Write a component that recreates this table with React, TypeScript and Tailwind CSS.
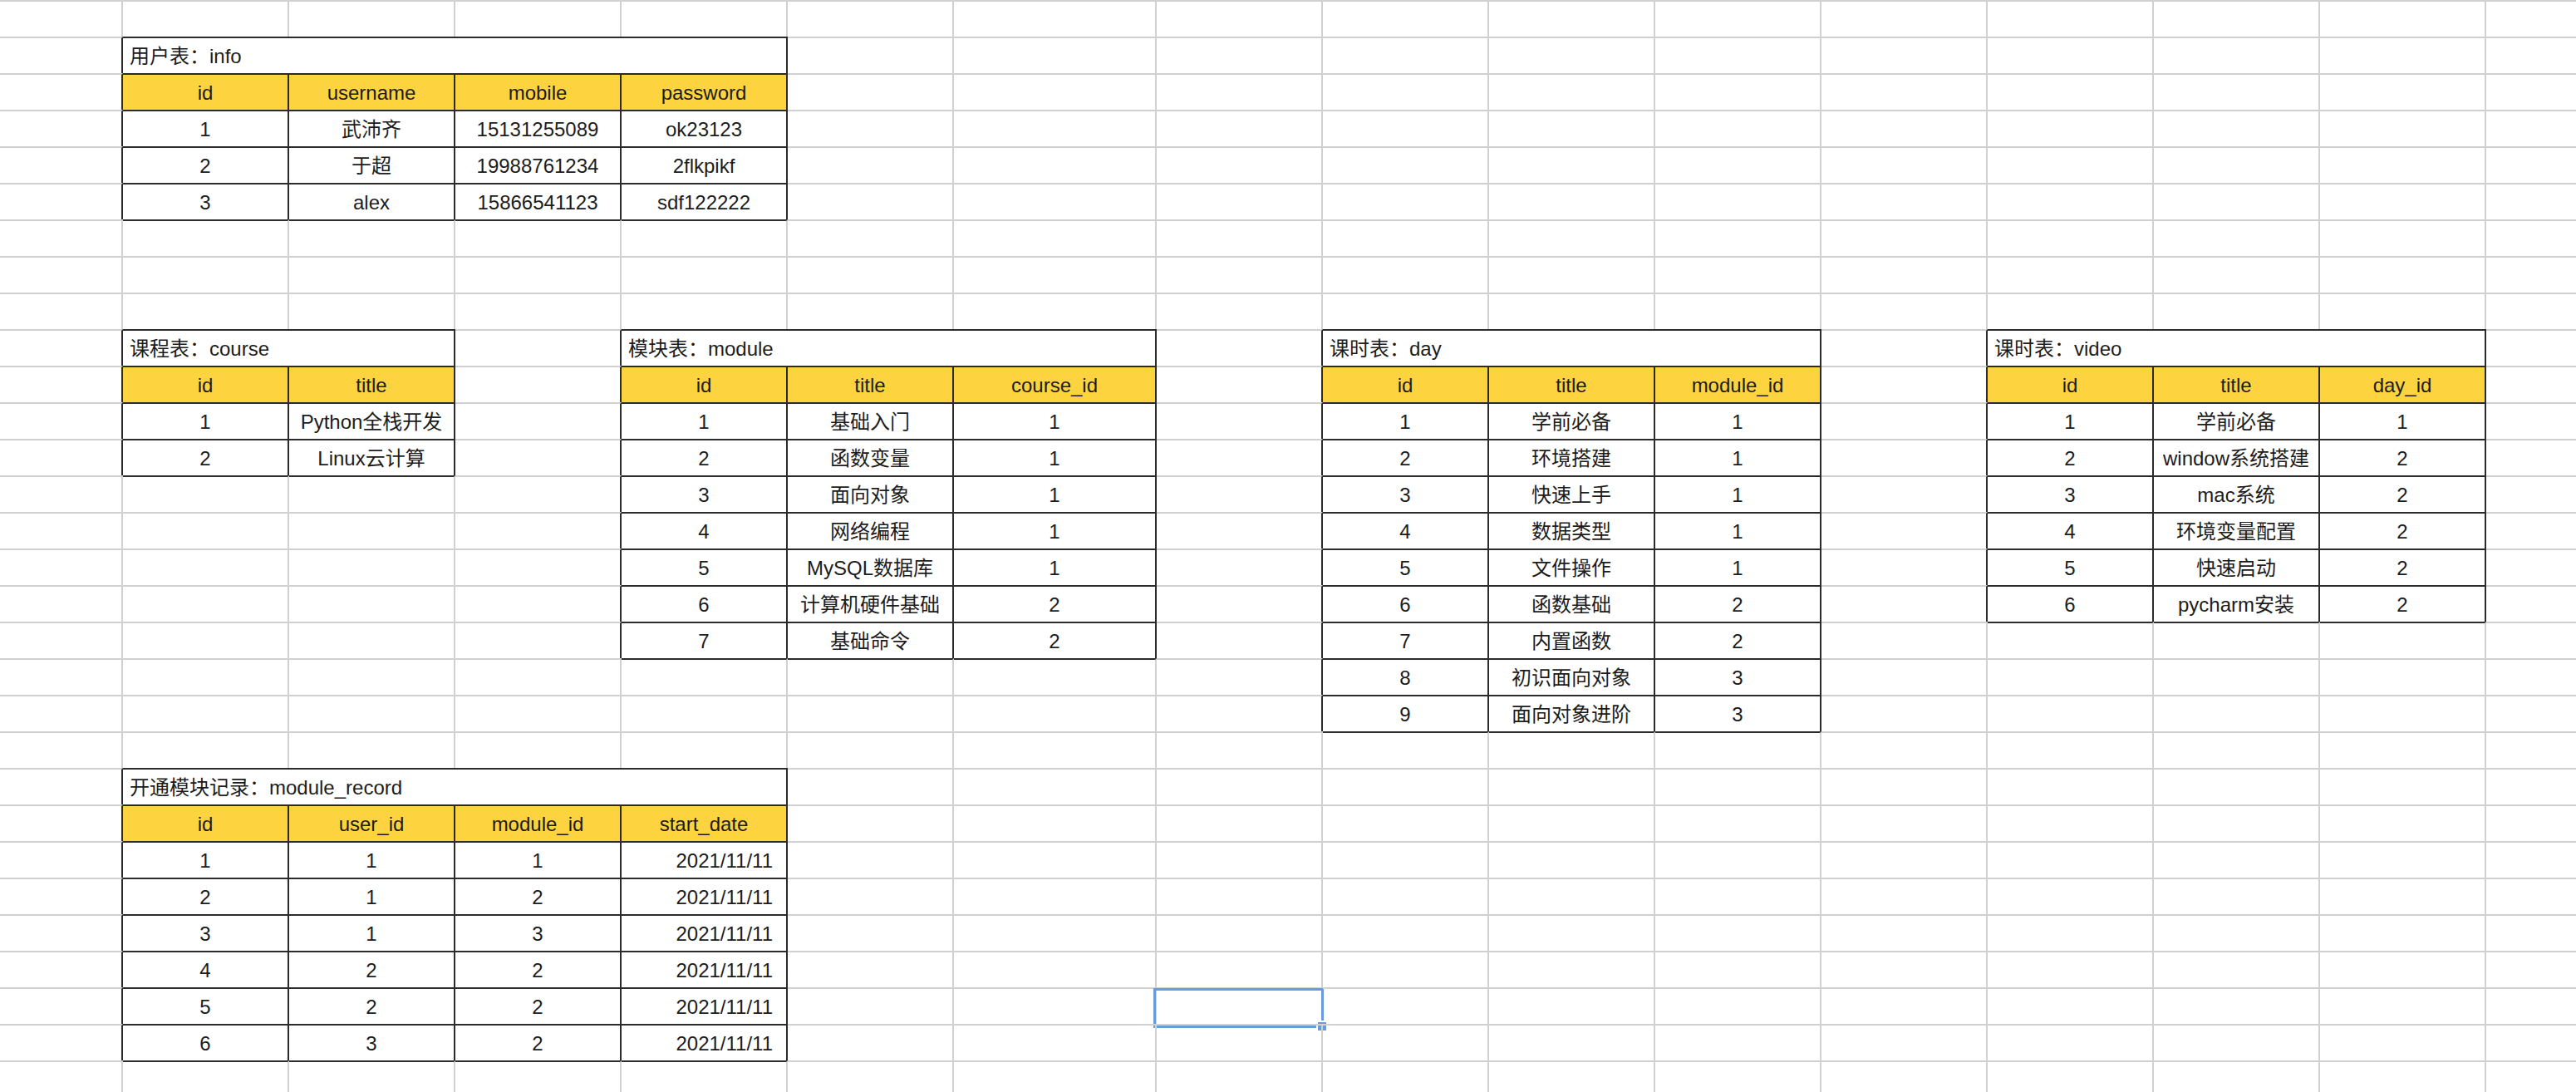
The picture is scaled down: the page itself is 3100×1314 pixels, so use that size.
import type { ReactNode } from "react"

type Align = "center" | "left" | "right"

interface SheetTable {
  row: number
  col: number
  title: string
  headers: string[]
  rows: (string | number)[][]
  align?: Align[]
}

type Cell =
  | { kind: "empty" }
  | { kind: "covered" }
  | { kind: "title"; text: string; span: number }
  | { kind: "header"; text: string }
  | { kind: "data"; text: string; align: Align }

const COLS = 16
const ROWS = 30
const SELECTED = { row: 27, col: 7 }

const TABLES: SheetTable[] = [
  {
    row: 1,
    col: 1,
    title: "用户表：info",
    headers: ["id", "username", "mobile", "password"],
    rows: [
      [1, "武沛齐", "15131255089", "ok23123"],
      [2, "于超", "19988761234", "2flkpikf"],
      [3, "alex", "15866541123", "sdf122222"],
    ],
  },
  {
    row: 9,
    col: 1,
    title: "课程表：course",
    headers: ["id", "title"],
    rows: [
      [1, "Python全栈开发"],
      [2, "Linux云计算"],
    ],
  },
  {
    row: 9,
    col: 4,
    title: "模块表：module",
    headers: ["id", "title", "course_id"],
    rows: [
      [1, "基础入门", 1],
      [2, "函数变量", 1],
      [3, "面向对象", 1],
      [4, "网络编程", 1],
      [5, "MySQL数据库", 1],
      [6, "计算机硬件基础", 2],
      [7, "基础命令", 2],
    ],
  },
  {
    row: 9,
    col: 8,
    title: "课时表：day",
    headers: ["id", "title", "module_id"],
    rows: [
      [1, "学前必备", 1],
      [2, "环境搭建", 1],
      [3, "快速上手", 1],
      [4, "数据类型", 1],
      [5, "文件操作", 1],
      [6, "函数基础", 2],
      [7, "内置函数", 2],
      [8, "初识面向对象", 3],
      [9, "面向对象进阶", 3],
    ],
  },
  {
    row: 9,
    col: 12,
    title: "课时表：video",
    headers: ["id", "title", "day_id"],
    rows: [
      [1, "学前必备", 1],
      [2, "window系统搭建", 2],
      [3, "mac系统", 2],
      [4, "环境变量配置", 2],
      [5, "快速启动", 2],
      [6, "pycharm安装", 2],
    ],
  },
  {
    row: 21,
    col: 1,
    title: "开通模块记录：module_record",
    headers: ["id", "user_id", "module_id", "start_date"],
    rows: [
      [1, 1, 1, "2021/11/11"],
      [2, 1, 2, "2021/11/11"],
      [3, 1, 3, "2021/11/11"],
      [4, 2, 2, "2021/11/11"],
      [5, 2, 2, "2021/11/11"],
      [6, 3, 2, "2021/11/11"],
    ],
    align: ["center", "center", "center", "right"],
  },
]

const SPAN: Record<number, string> = {
  1: "",
  2: "col-span-2",
  3: "col-span-3",
  4: "col-span-4",
}

function buildSheet(): Cell[][] {
  const grid: Cell[][] = Array.from({ length: ROWS }, () =>
    Array.from({ length: COLS }, () => ({ kind: "empty" }) as Cell)
  )
  for (const t of TABLES) {
    const n = t.headers.length
    grid[t.row][t.col] = { kind: "title", text: t.title, span: n }
    for (let i = 1; i < n; i++) grid[t.row][t.col + i] = { kind: "covered" }
    t.headers.forEach((h, i) => {
      grid[t.row + 1][t.col + i] = { kind: "header", text: h }
    })
    t.rows.forEach((r, ri) => {
      r.forEach((v, i) => {
        grid[t.row + 2 + ri][t.col + i] = {
          kind: "data",
          text: String(v),
          align: t.align?.[i] ?? "center",
        }
      })
    })
  }
  return grid
}

function SelectionBox() {
  return (
    <div className="pointer-events-none absolute -left-[4px] -top-[1px] h-[48px] w-[205px]">
      <div className="absolute inset-0 border-[3px] border-[#6a9bdb]" />
      <div className="absolute -bottom-[5px] -right-[5px] h-[14px] w-[14px] border-2 border-white bg-[#6a9bdb]" />
    </div>
  )
}

export default function App() {
  const sheet = buildSheet()
  const inTable = (r: number, c: number) =>
    r >= 0 && r < ROWS && c >= 0 && c < COLS && sheet[r][c].kind !== "empty"

  const items: ReactNode[] = []
  sheet.forEach((row, r) => {
    row.forEach((cell, c) => {
      if (cell.kind === "covered") return
      const span = cell.kind === "title" ? cell.span : 1
      const last = c + span - 1
      const topDark = inTable(r, c) || inTable(r - 1, c)
      const rightDark = inTable(r, last) || inTable(r, last + 1)

      let look = ""
      let text = ""
      if (cell.kind === "title") {
        look = "justify-start pl-2"
        text = cell.text
      } else if (cell.kind === "header") {
        look = "justify-center bg-[#fdd440]"
        text = cell.text
      } else if (cell.kind === "data") {
        look = cell.align === "right" ? "justify-end pr-4" : "justify-center"
        text = cell.text
      }

      const selected = r === SELECTED.row && c === SELECTED.col

      items.push(
        <div
          key={`${r}-${c}`}
          className={[
            "relative flex items-center whitespace-nowrap border-t-2 border-r-2 pt-[2px]",
            topDark ? "border-t-[#2b2b2b]" : "border-t-[#d1d1d1]",
            rightDark ? "border-r-[#2b2b2b]" : "border-r-[#d1d1d1]",
            SPAN[span],
            look,
          ].join(" ")}
        >
          {text}
          {selected && <SelectionBox />}
        </div>
      )
    })
  })

  return (
    <div className="h-[1314px] w-[3100px] overflow-hidden bg-white font-['Liberation_Sans','Noto_Sans_CJK_SC',sans-serif] text-[24px] leading-none text-[#1c1c1c]">
      <div className="grid w-max auto-rows-[44px] grid-cols-[148px_200px_200px_200px_200px_200px_244px_200px_200px_200px_200px_200px_200px_200px_200px_200px]">
        {items}
      </div>
    </div>
  )
}
